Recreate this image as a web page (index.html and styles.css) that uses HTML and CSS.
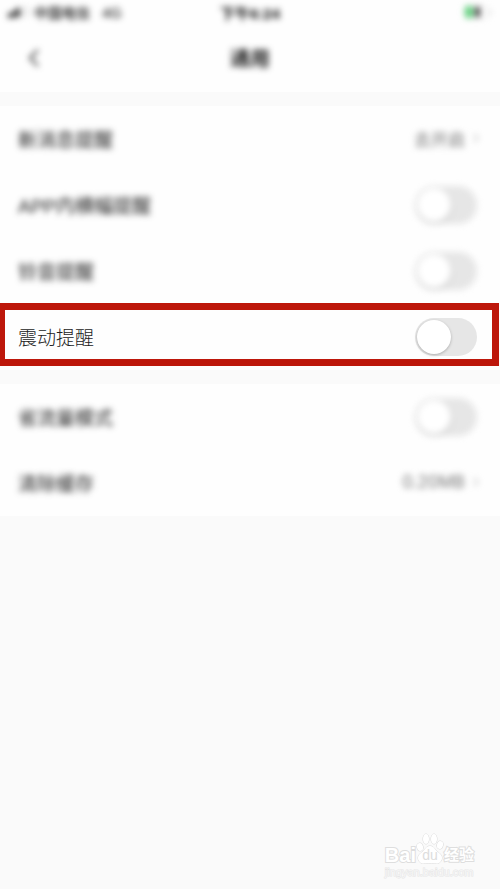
FILE: index.html
```html
<!DOCTYPE html>
<html lang="zh-CN">
<head>
  <meta charset="UTF-8">
  <meta name="viewport" content="width=device-width, initial-scale=1">
  <title>通用</title>
  <link rel="stylesheet" href="styles.css">
</head>
<body>
  <header class="top">
    <div class="status-bar soft">
      <div class="carrier">
        <svg class="signal" width="22" height="12" viewBox="0 0 22 12" aria-hidden="true">
          <rect x="0" y="7" width="3" height="5" fill="#222"/>
          <rect x="4" y="5" width="3" height="7" fill="#222"/>
          <rect x="8" y="2" width="4" height="9" fill="#222"/>
          <rect x="17" y="0" width="2" height="11" fill="#ccc"/>
        </svg>
        <span>中国电信</span>
        <span class="network">4G</span>
      </div>
      <div class="clock">下午6:24</div>
      <svg class="battery" width="28" height="14" viewBox="0 0 28 14" aria-hidden="true">
        <rect x="1" y="1" width="22" height="12" rx="3" fill="#fff" stroke="#ddd"/>
        <rect x="1" y="1" width="8" height="12" rx="2" fill="#5fd07c"/>
        <rect x="11" y="2" width="5" height="10" fill="#333"/>
        <rect x="25" y="5" width="2" height="5" fill="#ddd"/>
      </svg>
    </div>
    <nav class="nav-bar soft">
      <button class="back" type="button" aria-label="返回">
        <svg width="12" height="20" viewBox="0 0 12 20" fill="none" stroke="#333" stroke-width="2">
          <path d="M10 2L2 10l8 8"/>
        </svg>
      </button>
      <h1>通用</h1>
    </nav>
  </header>

  <main>
    <section class="group">
      <a class="row soft" href="#message">
        <span class="name">新消息提醒</span>
        <span class="value">去开启
          <svg width="6" height="10" viewBox="0 0 6 10" fill="none" stroke="#888"><path d="M1 1l4 4-4 4"/></svg>
        </span>
      </a>
      <label class="row soft">
        <span class="name">APP内横幅提醒</span>
        <input class="switch" type="checkbox" role="switch">
      </label>
      <label class="row soft">
        <span class="name">铃音提醒</span>
        <input class="switch" type="checkbox" role="switch">
      </label>
      <label class="row marked">
        <span class="name">震动提醒</span>
        <input class="switch" type="checkbox" role="switch">
      </label>
    </section>

    <section class="group">
      <label class="row soft">
        <span class="name">省流量模式</span>
        <input class="switch" type="checkbox" role="switch">
      </label>
      <a class="row soft" href="#cache">
        <span class="name">清除缓存</span>
        <span class="value">0.20MB
          <svg width="6" height="10" viewBox="0 0 6 10" fill="none" stroke="#888"><path d="M1 1l4 4-4 4"/></svg>
        </span>
      </a>
    </section>
  </main>

  <footer class="watermark">
    <div class="brand">
      <span class="latin">Bai</span>
      <span class="paw">
        <svg width="28" height="32" viewBox="0 0 28 32" fill="#fff" stroke="#dadada" aria-hidden="true">
          <ellipse cx="4" cy="14" rx="3" ry="4" transform="rotate(-15 4 14)"/>
          <ellipse cx="10" cy="6" rx="3" ry="5"/>
          <ellipse cx="18" cy="6" rx="3" ry="5"/>
          <ellipse cx="24" cy="12" rx="3" ry="4" transform="rotate(15 24 12)"/>
          <path d="M14 13c-4 0-5 4-8 6-4 3-5 6-3 9 2 4 7 2 11 2s9 2 11-2c2-3 1-6-3-9-3-2-4-6-8-6z"/>
        </svg>
        <span class="du">du</span>
      </span>
      <span class="cjk">经验</span>
    </div>
    <div class="site">jingyan.baidu.com</div>
  </footer>
</body>
</html>
```

FILE: styles.css
```css
:root {
  --page: #fafafa;
  --panel: #fefefe;
  --text: #222;
  --muted: #777;
  --mark: #bd170b;
  --outline: #dedede;
}

* {
  box-sizing: border-box;
}

body {
  margin: 0;
  min-height: 100vh;
  display: flex;
  flex-direction: column;
  background: var(--page);
  color: var(--text);
  font-family: "Liberation Sans", "Noto Sans CJK SC", sans-serif;
  font-size: 19px;
}

.soft > * {
  filter: blur(3px);
}

/* header */
.top {
  background: var(--panel);
  padding-bottom: 6px;
}

.status-bar {
  display: grid;
  grid-template-columns: 1fr auto 1fr;
  align-items: center;
  height: 24px;
  padding: 0 8px;
  color: #111;
  font-size: 14px;
}

.carrier {
  display: flex;
  align-items: center;
  gap: 4px;
  font-weight: 500;
}

.network {
  margin-left: 8px;
  font-size: 15px;
}

.clock {
  font-size: 15px;
  font-weight: 700;
}

.battery {
  justify-self: end;
}

.nav-bar {
  display: grid;
  grid-template-columns: 1fr auto 1fr;
  align-items: center;
  height: 56px;
  padding: 0 24px;
  margin-top: 6px;
}

.back {
  display: flex;
  justify-self: start;
  padding: 4px;
  border: none;
  background: none;
  cursor: pointer;
}

h1 {
  margin: 0;
  padding-bottom: 2px;
  font-size: 20px;
  font-weight: 700;
}

/* settings */
main {
  display: flex;
  flex-direction: column;
  gap: 14px;
  margin-top: 14px;
}

.group {
  background: var(--panel);
}

.row {
  position: relative;
  display: flex;
  justify-content: space-between;
  align-items: center;
  height: 66px;
  padding: 0 23px 0 18px;
  color: var(--text);
  text-decoration: none;
}

.name,
.value {
  padding-bottom: 2px;
}

.marked .name {
  font-weight: 300;
}

.value {
  display: flex;
  align-items: center;
  gap: 8px;
  margin-right: -2px;
  color: var(--muted);
  font-family: Inter, "Noto Sans CJK SC", sans-serif;
  font-size: 17px;
}

.marked::after {
  content: "";
  position: absolute;
  inset: -1px 1px 4px 0;
  border: 7px solid var(--mark);
  border-left-width: 5px;
  pointer-events: none;
}

.switch {
  appearance: none;
  display: flex;
  align-items: center;
  width: 62px;
  height: 38px;
  margin: 0;
  padding: 2px;
  border-radius: 19px;
  background: #e6e6e6;
  cursor: pointer;
}

.switch::before {
  content: "";
  width: 34px;
  height: 34px;
  border-radius: 50%;
  background: #fff;
  box-shadow: 0 1px 3px rgba(0, 0, 0, 0.25);
}

.switch:checked {
  justify-content: flex-end;
  background: #4cd964;
}

/* watermark */
.watermark {
  align-self: flex-end;
  margin-top: auto;
  padding: 0 26px 10px 0;
  color: #fff;
}

.brand {
  display: flex;
  align-items: flex-end;
  height: 32px;
  line-height: 20px;
  -webkit-text-stroke: 2px var(--outline);
  paint-order: stroke fill;
}

.latin {
  font-size: 20px;
  font-weight: 700;
}

.paw {
  display: grid;
  place-items: end center;
}

.paw > * {
  grid-area: 1 / 1;
}

.du {
  color: #ddd;
  font-size: 14px;
  -webkit-text-stroke: 0;
}

.cjk {
  font-size: 15px;
  font-weight: 700;
}

.site {
  color: #f6f6f6;
  font-size: 11px;
  line-height: 14px;
  -webkit-text-stroke: 1px #e6e6e6;
  paint-order: stroke fill;
}
```
